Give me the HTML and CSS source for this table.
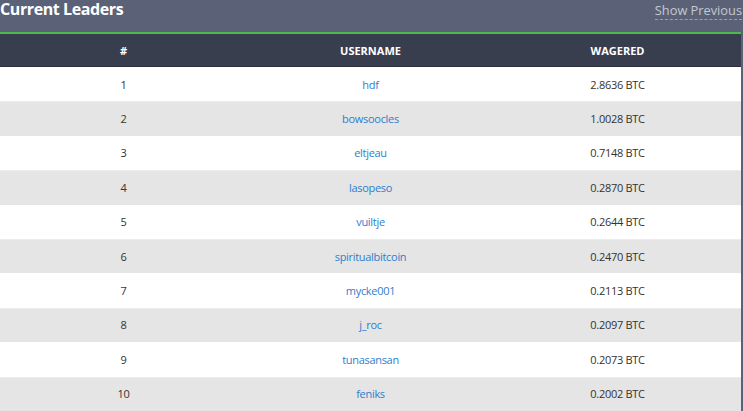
FILE: index.html
```html
<!DOCTYPE html>
<html>
<head>
<meta charset="utf-8">
<link rel="stylesheet" href="styles.css">
</head>
<body>
<div class="page">
  <div class="topbar">
    <h2 class="title">Current Leaders</h2>
    <a class="prev">Show Previous</a>
  </div>
  <div class="tablewrap">
    <table class="leaders">
      <thead>
        <tr><th>#</th><th>USERNAME</th><th>WAGERED</th></tr>
      </thead>
      <tbody>
        <tr><td>1</td><td><a>hdf</a></td><td>2.8636 BTC</td></tr>
        <tr><td>2</td><td><a>bowsoocles</a></td><td>1.0028 BTC</td></tr>
        <tr><td>3</td><td><a>eltjeau</a></td><td>0.7148 BTC</td></tr>
        <tr><td>4</td><td><a>lasopeso</a></td><td>0.2870 BTC</td></tr>
        <tr><td>5</td><td><a>vuiltje</a></td><td>0.2644 BTC</td></tr>
        <tr><td>6</td><td><a>spiritualbitcoin</a></td><td>0.2470 BTC</td></tr>
        <tr><td>7</td><td><a>mycke001</a></td><td>0.2113 BTC</td></tr>
        <tr><td>8</td><td><a>j_roc</a></td><td>0.2097 BTC</td></tr>
        <tr><td>9</td><td><a>tunasansan</a></td><td>0.2073 BTC</td></tr>
        <tr><td>10</td><td><a>feniks</a></td><td>0.2002 BTC</td></tr>
      </tbody>
    </table>
  </div>
</div>
</body>
</html>
```

FILE: styles.css
```css
html, body {
  margin: 0;
  padding: 0;
  background: #5b6277;
  font-family: "Open Sans", "Noto Sans", sans-serif;
}
.page {
  width: 743px;
  height: 411px;
  overflow: hidden;
  background: #5b6277;
}
.topbar {
  height: 32px;
  display: flex;
  justify-content: space-between;
  align-items: flex-start;
}
.title {
  margin: 0;
  color: #ffffff;
  font-size: 16px;
  font-weight: 700;
  line-height: 19px;
  letter-spacing: -0.4px;
}
.prev {
  margin-top: 2px;
  color: #c3c7d0;
  font-size: 12.8px;
  line-height: 17px;
  border-bottom: 1px dashed #9aa0ad;
  margin-right: 1px;
}
.tablewrap {
  width: 741px;
  border-top: 2px solid #4cbb4a;
}
.leaders {
  width: 741px;
  border-collapse: collapse;
  table-layout: fixed;
  font-size: 11px;
  letter-spacing: -0.3px;
}
.leaders th {
  background: #393e4f;
  color: #ffffff;
  font-weight: 700;
  font-size: 11px;
  letter-spacing: 0;
  height: 32px;
  padding: 0;
  text-align: center;
  border-bottom: 1px solid #2c303c;
}
.leaders td {
  height: 34.4px;
  padding: 0;
  text-align: center;
  color: #333333;
  background: #ffffff;
}
.leaders tbody tr:nth-child(even) td {
  background: #e5e5e5;
  box-shadow: inset 0 1px 0 #ececec;
}
.leaders a {
  color: #2d7ecf;
}
```
